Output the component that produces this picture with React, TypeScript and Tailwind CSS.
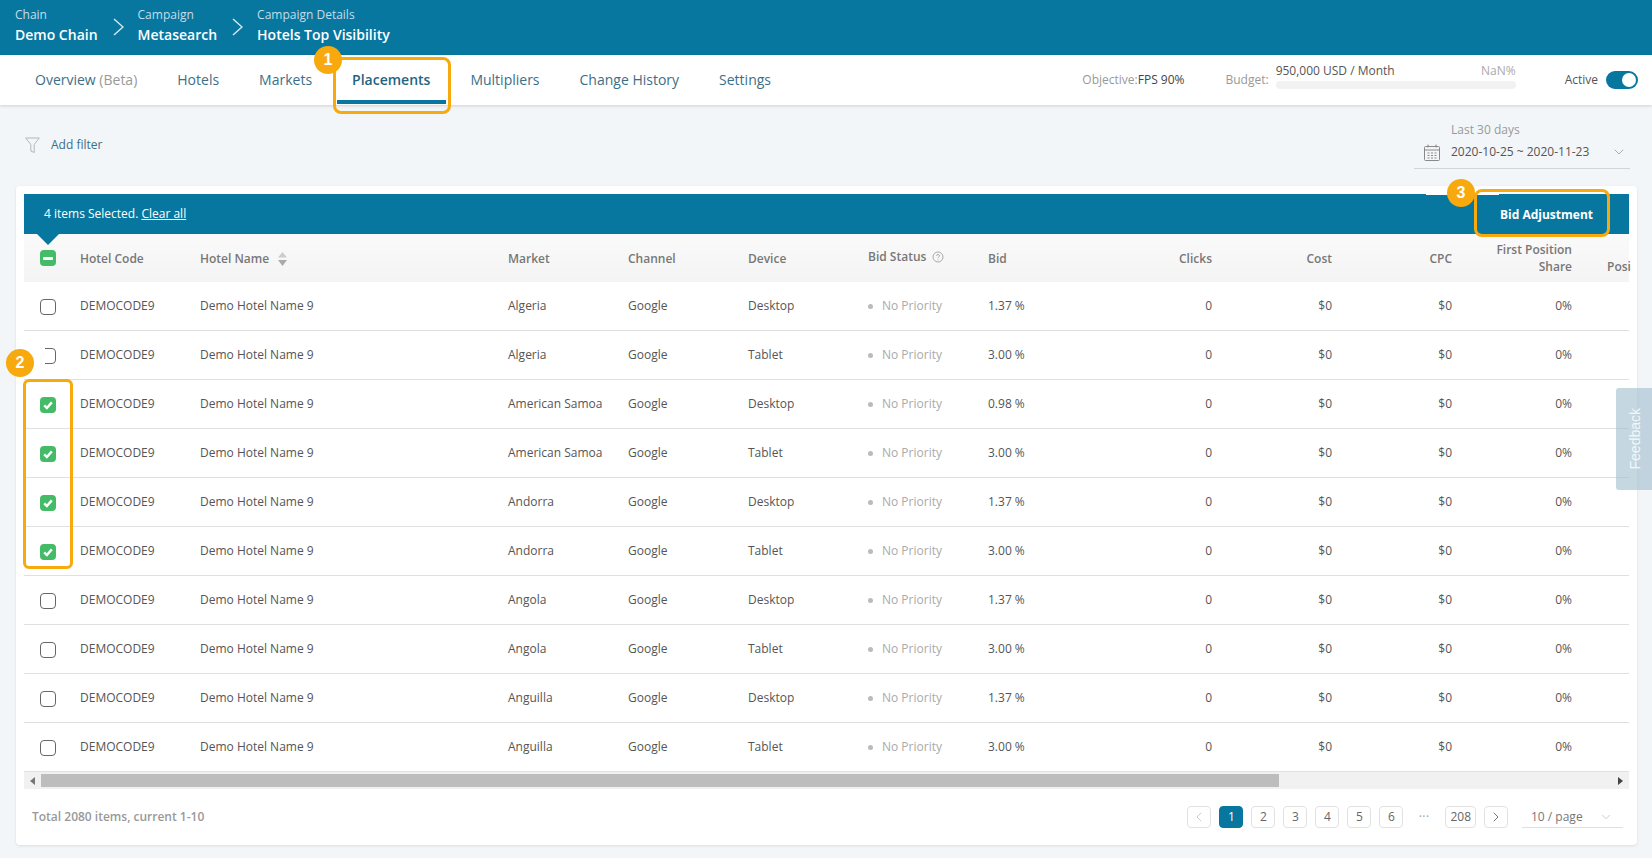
import { ChevronDown, ChevronLeft, ChevronRight } from "lucide-react";

const rows = [
  { market: "Algeria", device: "Desktop", bid: "1.37 %", checked: false },
  { market: "Algeria", device: "Tablet", bid: "3.00 %", checked: false },
  { market: "American Samoa", device: "Desktop", bid: "0.98 %", checked: true },
  { market: "American Samoa", device: "Tablet", bid: "3.00 %", checked: true },
  { market: "Andorra", device: "Desktop", bid: "1.37 %", checked: true },
  { market: "Andorra", device: "Tablet", bid: "3.00 %", checked: true },
  { market: "Angola", device: "Desktop", bid: "1.37 %", checked: false },
  { market: "Angola", device: "Tablet", bid: "3.00 %", checked: false },
  { market: "Anguilla", device: "Desktop", bid: "1.37 %", checked: false },
  { market: "Anguilla", device: "Tablet", bid: "3.00 %", checked: false },
];

const tabs = ["Hotels", "Markets", "Placements", "Multipliers", "Change History", "Settings"];
const pages = ["2", "3", "4", "5", "6"];
const gridCols = "grid grid-cols-[56px_120px_308px_120px_120px_120px_120px_120px_104px_120px_120px_120px_57px]";

const Crumb = ({ label, value }: { label: string; value: string }) => (
  <div>
    <div className="text-[12px] leading-[16px] text-[#c6dde8]">{label}</div>
    <div className="mt-[2px] text-[14px] leading-[20px] font-semibold text-white">{value}</div>
  </div>
);

const CrumbArrow = () => (
  <svg className="mt-[11px] mr-[14px] ml-[15px]" width="11" height="18" viewBox="0 0 11 18" fill="none" stroke="#d5e6ee" strokeWidth="1.5">
    <path d="M1 1 L10 9 L1 17" />
  </svg>
);

const Checkbox = ({ checked }: { checked: boolean }) =>
  checked ? (
    <div className="flex h-4 w-4 items-center justify-center rounded-[4px] bg-[#44bb66]">
      <svg width="12" height="12" viewBox="0 0 12 12" fill="none">
        <path d="M2.2 6.3 L4.9 9 L9.8 3.4" stroke="white" strokeWidth="2.4" />
      </svg>
    </div>
  ) : (
    <div className="h-4 w-4 rounded-[4px] border border-[#666] bg-white" />
  );

const Badge = ({ n, className }: { n: number; className: string }) => (
  <div
    className={`absolute flex h-[28px] w-[28px] items-center justify-center rounded-full bg-[#f7a90e] font-['Liberation_Sans',sans-serif] text-[16px] font-bold text-white ${className}`}
  >
    {n}
  </div>
);

const PageBtn = ({ children, active }: { children: React.ReactNode; active?: boolean }) => (
  <div
    className={`flex h-[22px] min-w-[24px] items-center justify-center rounded-[4px] border px-[1px] text-[12px] ${
      active ? "border-[#07779f] bg-[#07779f] text-white" : "border-[#e2e2e2] bg-white text-[#666]"
    }`}
  >
    {children}
  </div>
);

export default function App() {
  return (
    <div className="relative h-[858px] w-[1652px] overflow-hidden bg-[#f2f6f9] font-['Open_Sans',sans-serif] text-[12px] text-[#555]">
      {/* top breadcrumb */}
      <div className="flex h-[55px] items-start bg-[#07779f] pt-[7px] pl-[15px]">
        <Crumb label="Chain" value="Demo Chain" />
        <CrumbArrow />
        <Crumb label="Campaign" value="Metasearch" />
        <CrumbArrow />
        <Crumb label="Campaign Details" value="Hotels Top Visibility" />
      </div>

      {/* tabs */}
      <div className="flex h-[50px] items-center justify-between bg-white pr-[14px] pl-[35px] shadow-[0_1px_3px_rgba(0,0,0,0.15)]">
        <div className="flex h-full gap-[40px] text-[14px] text-[#3b6f88]">
          <div className="flex items-center pb-[2px]">
            Overview&nbsp;<span className="text-[#999]">(Beta)</span>
          </div>
          {tabs.map((t) =>
            t === "Placements" ? (
              <div key={t} className="relative flex items-center pb-[2px] font-semibold text-[#1f6582]">
                {t}
                <div className="absolute right-[-16px] bottom-[1px] left-[-15px] h-[4px] bg-[#07779f]" />
              </div>
            ) : (
              <div key={t} className="flex items-center pb-[2px]">
                {t}
              </div>
            )
          )}
        </div>
        <div className="flex items-center">
          <div className="text-[#999]">
            Objective:<span className="text-[#444]">FPS 90%</span>
          </div>
          <div className="ml-[41px] text-[#999]">Budget:</div>
          <div className="-mt-[8px] ml-[7px] w-[240px]">
            <div className="flex justify-between leading-[16px]">
              <span className="text-[#555]">950,000 USD / Month</span>
              <span className="text-[#aaa]">NaN%</span>
            </div>
            <div className="mt-[2px] h-[8px] rounded-[4px] bg-[#f2f2f2]" />
          </div>
          <div className="ml-[49px] text-[#555]">Active</div>
          <div className="ml-[8px] flex h-[18px] w-[32px] items-center justify-end rounded-full bg-[#07779f] pr-[2px]">
            <div className="h-[14px] w-[14px] rounded-full bg-white" />
          </div>
        </div>
      </div>

      {/* filter row */}
      <div className="flex h-[81px] items-start justify-between pr-[22px] pl-[25px]">
        <div className="mt-[31px] flex items-center gap-[11px] text-[#3b6f88]">
          <svg width="15" height="17" viewBox="0 0 15 17" fill="none" stroke="#b5b5b5">
            <path d="M0.7 1 H14.3 L9.2 7.5 V15.5 L5.8 14 V7.5 Z" />
          </svg>
          Add filter
        </div>
        <div className="mt-[17px] w-[216px] border-b border-[#cfd5d9]">
          <div className="pl-[37px] leading-[16px] text-[#999]">Last 30 days</div>
          <div className="flex h-[30px] items-center pr-[3px] pb-[2px] pl-[10px]">
            <svg width="16" height="17" viewBox="0 0 16 17" fill="none" stroke="#888">
              <rect x="0.5" y="2.5" width="15" height="14" rx="1" />
              <path d="M0.5 6 H15.5 M4 0.5 V3.5 M12 0.5 V3.5" />
              <path d="M3.5 9 H12.5 M3.5 11.5 H12.5 M3.5 14 H12.5" strokeDasharray="2 1.5" />
            </svg>
            <span className="ml-[11px] flex-1 text-[#555]">2020-10-25 ~ 2020-11-23</span>
            <ChevronDown className="h-[16px] w-[16px] text-[#999]" strokeWidth={1.2} />
          </div>
        </div>
      </div>

      {/* table card */}
      <div className="ml-[16px] h-[659px] w-[1621px] rounded-[4px] bg-white p-2 shadow-[0_1px_3px_rgba(0,0,0,0.1)]">
        <div className="flex h-[40px] items-center justify-between bg-[#07779f] pr-[36px] pl-[20px] text-white">
          <div>
            4 items Selected. <span className="underline">Clear all</span>
          </div>
          <div className="pt-[1px] font-bold">Bid Adjustment</div>
        </div>

        <div className={`${gridCols} relative h-[48px] items-center bg-gradient-to-b from-[#fafafa] to-[#f4f4f4] font-semibold text-[#777]`}>
          <div className="absolute top-0 left-[13px] h-0 w-0 border-x-[11px] border-t-[11px] border-x-transparent border-t-[#07779f]" />
          <div className="pl-[16px]">
            <div className="flex h-4 w-4 items-center justify-center rounded-[4px] bg-[#44bb66]">
              <div className="h-[3px] w-[10px] rounded-[1px] bg-white" />
            </div>
          </div>
          <div className="pt-[2px]">Hotel Code</div>
          <div className="flex items-center gap-[8px] pt-[2px]">
            Hotel Name
            <svg width="11" height="14" viewBox="0 0 11 14" fill="#aaa">
              <path d="M5.5 0 L10 5.5 H1 Z" fill="#ccc" />
              <path d="M5.5 14 L10 8 H1 Z" />
            </svg>
          </div>
          <div className="pt-[2px]">Market</div>
          <div className="pt-[2px]">Channel</div>
          <div className="pt-[2px]">Device</div>
          <div className="-mt-[2px] flex items-center gap-[6px]">
            Bid Status
            <svg width="12" height="12" viewBox="0 0 12 12" fill="none">
              <circle cx="6" cy="6" r="5" stroke="#aaa" />
              <path d="M4.5 4.8 C4.5 3 7.5 3 7.5 4.8 C7.5 6 6 5.8 6 7.2 M6 8.4 V9.3" stroke="#aaa" />
            </svg>
          </div>
          <div className="pt-[2px]">Bid</div>
          <div className="pt-[2px] text-right">Clicks</div>
          <div className="pt-[2px] text-right">Cost</div>
          <div className="pt-[2px] text-right">CPC</div>
          <div className="text-right leading-[17px]">
            First Position
            <br />
            Share
          </div>
          <div className="pt-[17px] pl-[35px] whitespace-nowrap">Posi</div>
        </div>

        {rows.map((r, i) => (
          <div key={i} className={`${gridCols} h-[49px] items-center border-b border-[#e0e0e0]`}>
            <div className="pt-[1px] pl-[16px]">
              <Checkbox checked={r.checked} />
            </div>
            <div>DEMOCODE9</div>
            <div>Demo Hotel Name 9</div>
            <div>{r.market}</div>
            <div>Google</div>
            <div>{r.device}</div>
            <div className="flex items-center gap-[9px] text-[#aaa]">
              <span className="h-[5px] w-[5px] rounded-full bg-[#bbb]" />
              No Priority
            </div>
            <div>{r.bid}</div>
            <div className="text-right">0</div>
            <div className="text-right">$0</div>
            <div className="text-right">$0</div>
            <div className="text-right">0%</div>
            <div />
          </div>
        ))}

        {/* horizontal scrollbar */}
        <div className="flex h-[17px] items-center bg-[#f1f1f1]">
          <div className="flex w-[17px] justify-center">
            <div className="h-0 w-0 border-y-[4px] border-r-[5px] border-y-transparent border-r-[#777]" />
          </div>
          <div className="h-[13px] w-[1238px] bg-[#bdbdbd]" />
          <div className="flex flex-1 justify-end pr-[6px]">
            <div className="h-0 w-0 border-y-[4px] border-l-[5px] border-y-transparent border-l-[#444]" />
          </div>
        </div>

        {/* footer */}
        <div className="mt-[17px] flex h-[22px] items-center justify-between pr-[6px] pl-[8px]">
          <div className="font-semibold text-[#999]">Total 2080 items, current 1-10</div>
          <div className="flex items-center">
            <div className="flex items-center gap-[8px]">
              <PageBtn>
                <ChevronLeft className="h-[16px] w-[16px] text-[#ccc]" strokeWidth={1.5} />
              </PageBtn>
              <PageBtn active>1</PageBtn>
              {pages.map((p) => (
                <PageBtn key={p}>{p}</PageBtn>
              ))}
              <div className="w-[26px] text-center text-[7px] tracking-[1px] text-[#aaa]">•••</div>
              <PageBtn>
                <span className="px-[3px]">208</span>
              </PageBtn>
              <PageBtn>
                <ChevronRight className="h-[16px] w-[16px] text-[#777]" strokeWidth={1.5} />
              </PageBtn>
            </div>
            <div className="ml-[14px] flex h-[22px] w-[101px] items-center justify-between border-b border-[#e0e0e0] pr-[10px] pl-[9px] text-[#777]">
              10 / page
              <ChevronDown className="h-[14px] w-[14px] text-[#bbb]" strokeWidth={1.3} />
            </div>
          </div>
        </div>
      </div>

      {/* annotations over the page */}
      <div className="absolute top-[57px] left-[333px] h-[57px] w-[118px] rounded-[8px] border-[3px] border-[#f7a90e]" />
      <Badge n={1} className="top-[46px] left-[314px]" />
      <div className="absolute top-[345px] left-[38px] h-[22px] w-[7px] bg-white" />
      <div className="absolute top-[379px] left-[23px] h-[190px] w-[50px] rounded-[6px] border-[3px] border-[#f7a90e]" />
      <Badge n={2} className="top-[349px] left-[6px]" />
      <div className="absolute top-[192px] left-[1426px] h-[3px] w-[73px] bg-white" />
      <div className="absolute top-[189px] left-[1474px] h-[48px] w-[136px] rounded-[8px] border-[3px] border-[#f7a90e]" />
      <Badge n={3} className="top-[179px] left-[1447px]" />

      <div className="absolute top-[388px] right-0 flex h-[102px] w-[36px] items-center justify-center rounded-l-[3px] bg-[#9fbccd]/60 pl-[3px]">
        <span className="rotate-180 font-['Liberation_Sans',sans-serif] text-[14px] text-white/80 [writing-mode:vertical-rl]">
          Feedback
        </span>
      </div>
    </div>
  );
}
